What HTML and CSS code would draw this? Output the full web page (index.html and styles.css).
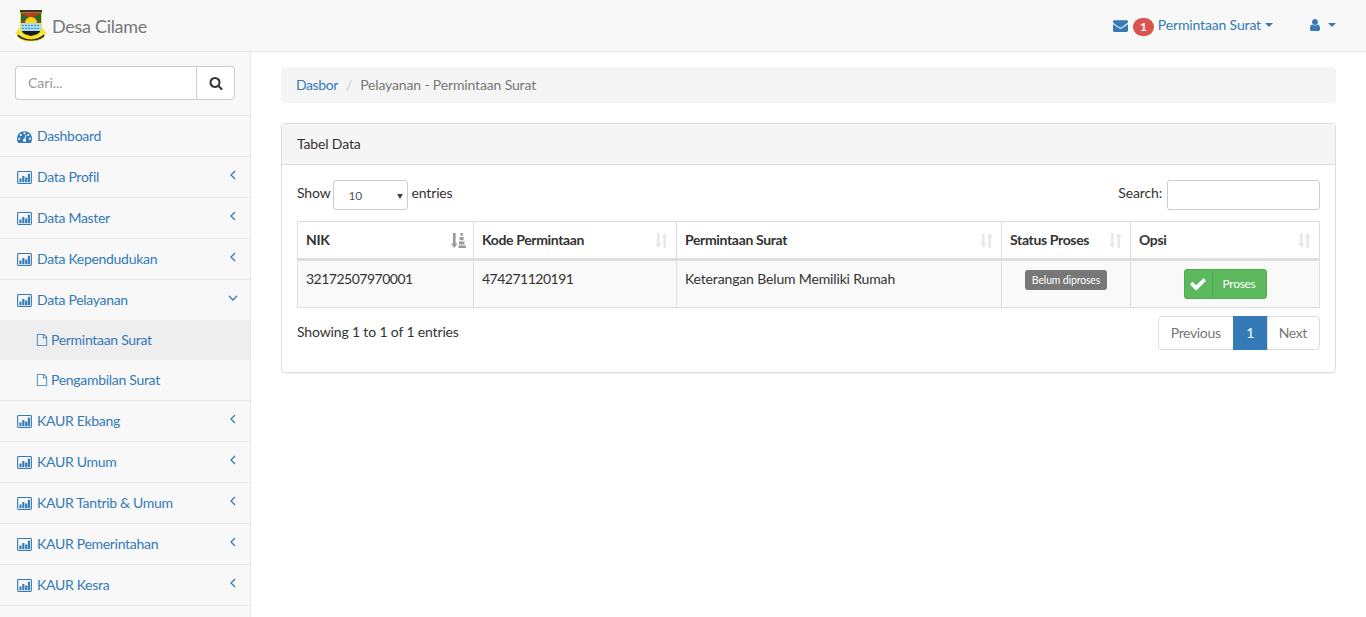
FILE: index.html
```html
<!DOCTYPE html>
<html lang="id">
<head>
<meta charset="utf-8">
<title>Desa Cilame</title>
<link rel="stylesheet" href="styles.css">
</head>
<body>
<svg class="defs" width="0" height="0" aria-hidden="true">
<symbol id="i-search" viewBox="0 0 1792 1792"><path d="M1216 832q0-185-131.5-316.5t-316.5-131.5-316.5 131.5-131.5 316.5 131.5 316.5 316.5 131.5 316.5-131.5 131.5-316.5zm512 832q0 52-38 90t-90 38q-54 0-90-38l-343-342q-179 124-399 124-143 0-273.5-55.5t-225-150-150-225-55.5-273.5 55.5-273.5 150-225 225-150 273.5-55.5 273.5 55.5 225 150 150 225 55.5 273.5q0 220-124 399l343 343q37 37 37 90z"/></symbol>
<symbol id="i-check" viewBox="0 0 1792 1792"><path d="M1671 566q0 40-28 68l-724 724-136 136q-28 28-68 28t-68-28l-136-136-362-362q-28-28-28-68t28-68l136-136q28-28 68-28t68 28l294 295 656-657q28-28 68-28t68 28l136 136q28 28 28 68z"/></symbol>
<symbol id="i-user" viewBox="0 0 1792 1792"><path d="M1536 1399q0 109-62.5 187t-150.5 78h-854q-88 0-150.5-78t-62.5-187q0-85 8.5-160.5t31.5-152 58.5-131 94-89 134.5-34.5q131 128 313 128t313-128q76 0 134.5 34.5t94 89 58.5 131 31.5 152 8.5 160.5zm-256-887q0 159-112.5 271.5t-271.5 112.5-271.5-112.5-112.5-271.5 112.5-271.5 271.5-112.5 271.5 112.5 112.5 271.5z"/></symbol>
<symbol id="i-mail" viewBox="0 0 1792 1792"><path d="M1792 710v794q0 66-47 113t-113 47h-1472q-66 0-113-47t-47-113v-794q44 49 101 87 362 246 497 345 57 42 92.5 65.5t94.5 48 110 24.5h2q51 0 110-24.5t94.5-48 92.5-65.5q170-123 498-345 57-39 100-87zm0-294q0 79-49 151t-122 123q-376 261-468 325-10 7-42.5 30.5t-54 38-52 32.5-57.5 27-50 9h-2q-23 0-50-9t-57.5-27-52-32.5-54-38-42.5-30.5q-91-64-262-182.5t-205-142.5q-62-42-117-115.5t-55-136.5q0-78 41.5-130t118.5-52h1472q65 0 112.5 47t47.5 113z"/></symbol>
<symbol id="i-dash" viewBox="0 0 1792 1792"><path d="M384 1152q0-53-37.5-90.5t-90.5-37.5-90.5 37.5-37.5 90.5 37.5 90.5 90.5 37.5 90.5-37.5 37.5-90.5zm192-448q0-53-37.5-90.5t-90.5-37.5-90.5 37.5-37.5 90.5 37.5 90.5 90.5 37.5 90.5-37.5 37.5-90.5zm428 481l101-382q6-26-7.5-48.5t-38.5-29.5-48 6.5-30 39.5l-101 382q-60 5-107 43.5t-63 98.5q-20 77 20 146t117 89 146-20 89-117q16-60-6-117t-72-91zm660-33q0-53-37.5-90.5t-90.5-37.5-90.5 37.5-37.5 90.5 37.5 90.5 90.5 37.5 90.5-37.5 37.5-90.5zm-640-640q0-53-37.5-90.5t-90.5-37.5-90.5 37.5-37.5 90.5 37.5 90.5 90.5 37.5 90.5-37.5 37.5-90.5zm448 192q0-53-37.5-90.5t-90.5-37.5-90.5 37.5-37.5 90.5 37.5 90.5 90.5 37.5 90.5-37.5 37.5-90.5zm320 448q0 261-141 483-19 29-54 29h-1402q-35 0-54-29-141-221-141-483 0-182 71-348t191-286 286-191 348-71 348 71 286 191 191 286 71 348z"/></symbol>
<symbol id="i-file" viewBox="0 0 1792 1792"><path d="M1596 380q28 28 48 76t20 88v1152q0 40-28 68t-68 28h-1344q-40 0-68-28t-28-68v-1600q0-40 28-68t68-28h896q40 0 88 20t76 48zm-444-244v376h376q-10-29-22-41l-313-313q-12-12-41-22zm384 1528v-1024h-416q-40 0-68-28t-28-68v-416h-768v1536h1280z"/></symbol>
<symbol id="i-chart" viewBox="0 0 16 14"><path fill-rule="evenodd" d="M1.500 0h13A1.500 1.500 0 0 1 16 1.500v11a1.500 1.500 0 0 1-1.500 1.500h-13A1.500 1.500 0 0 1 0 12.500v-11A1.500 1.500 0 0 1 1.500 0zm0 1.200a.3.3 0 0 0-.3.3v11a.3.3 0 0 0 .3.3h13a.3.3 0 0 0 .3-.3v-11a.3.3 0 0 0-.3-.3z"/><path d="M2.500 8h2.300v4H2.500zM5.600 5.500h2.300V12H5.600zM8.700 7h2.300v5H8.700zM11.600 3h2.300v9h-2.300z"/></symbol>
<symbol id="i-sort" viewBox="0 0 13 15"><path d="M2 0h2.600v10.500H6.500L3.300 15 0 10.500h2zM8.400 15h2.600V4.500h2L9.700 0 6.500 4.500h1.900z"/></symbol>
<symbol id="i-sorted" viewBox="0 0 15 15"><path d="M2 0h2.600v10.500H6.500L3.300 15 0 10.500h2zM9.500 0h2.400v2.800H9.500zM8.600 4h4v3.200h-4zM8 8.400h5.400v3H8zM7.500 12.400H15V15H7.500z"/></symbol>
<symbol id="i-left" viewBox="0 0 8 10"><path d="M6 1 2 5l4 4" fill="none" stroke="currentColor" stroke-width="1.300"/></symbol>
<symbol id="i-down" viewBox="0 0 10 8"><path d="M1 2l4 4 4-4" fill="none" stroke="currentColor" stroke-width="1.300"/></symbol>
</svg>

<header class="navbar">
  <a class="brand" href="#">
    <svg class="logo" viewBox="0 0 32 32" aria-hidden="true">
      <path d="M0 23c2-.5 3-3 4-6 1 3 1 6 1 8zM32 23c-2-.5-3-3-4-6-1 3-1 6-1 8z" fill="#f5e11c"/>
      <path d="M5 0h22v21c0 5-6 7-11 9-5-2-11-4-11-9z" fill="#f5e11c"/>
      <rect x="5" y="0" width="22" height="2.500" fill="#3a3320"/>
      <path d="M6 3h20v10H6z" fill="#c0362c"/>
      <path d="M6 3l7 4-7 6zM26 3l-7 4 7 6z" fill="#1c6f3a"/>
      <path d="M10 13a6 6 0 0 1 12 0z" fill="#f5d90a"/>
      <path d="M6 13h20v8H6z" fill="#a6dcf2"/>
      <path d="M7 15.500h18M7 18.500h18" stroke="#4a90c8" stroke-width="1.200" stroke-dasharray="2 1"/>
      <path d="M7 21h18c0 2-4 4-9 5-5-1-9-3-9-5z" fill="#1b1b1b"/>
      <path d="M3 24c4 3 8 5 13 5s9-2 13-5l1 2c-4 4-9 5-14 5s-10-1-14-5z" fill="#2a2a12" stroke="#f5e11c" stroke-width=".8"/>
    </svg>
    <span>Desa Cilame</span>
  </a>
  <nav class="nav-right">
    <a class="nav-link nav-notif" href="#">
      <svg class="ic ic-mail"><use href="#i-mail"/></svg>
      <span class="badge-count">1</span>
      <span class="notif-text">Permintaan Surat</span>
      <i class="caret"></i>
    </a>
    <a class="nav-link nav-user" href="#">
      <svg class="ic ic-14"><use href="#i-user"/></svg>
      <i class="caret"></i>
    </a>
  </nav>
</header>

<div class="layout">
  <aside class="sidebar">
    <div class="side-search">
      <div class="input-group">
        <input class="search-input" type="text" placeholder="Cari...">
        <button class="search-btn" type="button"><svg class="ic ic-14"><use href="#i-search"/></svg></button>
      </div>
    </div>
    <ul class="menu">
      <li class="menu-item"><a href="#"><svg class="ic ic-dash"><use href="#i-dash"/></svg><span>Dashboard</span></a></li>
      <li class="menu-item"><a href="#"><svg class="ic ic-chart"><use href="#i-chart"/></svg><span>Data Profil</span><svg class="arrow"><use href="#i-left"/></svg></a></li>
      <li class="menu-item"><a href="#"><svg class="ic ic-chart"><use href="#i-chart"/></svg><span>Data Master</span><svg class="arrow"><use href="#i-left"/></svg></a></li>
      <li class="menu-item"><a href="#"><svg class="ic ic-chart"><use href="#i-chart"/></svg><span>Data Kependudukan</span><svg class="arrow"><use href="#i-left"/></svg></a></li>
      <li class="menu-item">
        <a href="#"><svg class="ic ic-chart"><use href="#i-chart"/></svg><span>Data Pelayanan</span><svg class="arrow arrow-down"><use href="#i-down"/></svg></a>
        <ul class="submenu">
          <li class="sub-item active"><a href="#"><svg class="ic ic-file"><use href="#i-file"/></svg><span>Permintaan Surat</span></a></li>
          <li class="sub-item"><a href="#"><svg class="ic ic-file"><use href="#i-file"/></svg><span>Pengambilan Surat</span></a></li>
        </ul>
      </li>
      <li class="menu-item"><a href="#"><svg class="ic ic-chart"><use href="#i-chart"/></svg><span>KAUR Ekbang</span><svg class="arrow"><use href="#i-left"/></svg></a></li>
      <li class="menu-item"><a href="#"><svg class="ic ic-chart"><use href="#i-chart"/></svg><span>KAUR Umum</span><svg class="arrow"><use href="#i-left"/></svg></a></li>
      <li class="menu-item"><a href="#"><svg class="ic ic-chart"><use href="#i-chart"/></svg><span>KAUR Tantrib &amp; Umum</span><svg class="arrow"><use href="#i-left"/></svg></a></li>
      <li class="menu-item"><a href="#"><svg class="ic ic-chart"><use href="#i-chart"/></svg><span>KAUR Pemerintahan</span><svg class="arrow"><use href="#i-left"/></svg></a></li>
      <li class="menu-item"><a href="#"><svg class="ic ic-chart"><use href="#i-chart"/></svg><span>KAUR Kesra</span><svg class="arrow"><use href="#i-left"/></svg></a></li>
    </ul>
  </aside>

  <main class="page">
    <ol class="breadcrumb">
      <li class="crumb-link"><a href="#">Dasbor</a></li>
      <li class="sep">/</li>
      <li class="current">Pelayanan - Permintaan Surat</li>
    </ol>

    <section class="panel">
      <div class="panel-heading">Tabel Data</div>
      <div class="panel-body">
        <div class="dt-top">
          <label class="dt-length"><span class="len-show">Show</span>
            <span class="select-box"><span>10</span><i class="select-arrow"></i></span>
            <span>entries</span></label>
          <label class="dt-filter">Search: <input class="dt-input" type="search"></label>
        </div>
        <table class="table">
          <colgroup>
            <col class="c1"><col class="c2"><col class="c3"><col class="c4"><col class="c5">
          </colgroup>
          <thead>
            <tr>
              <th><div class="th-in">NIK<svg class="sort sorted"><use href="#i-sorted"/></svg></div></th>
              <th><div class="th-in">Kode Permintaan<svg class="sort"><use href="#i-sort"/></svg></div></th>
              <th><div class="th-in">Permintaan Surat<svg class="sort"><use href="#i-sort"/></svg></div></th>
              <th><div class="th-in">Status Proses<svg class="sort"><use href="#i-sort"/></svg></div></th>
              <th><div class="th-in">Opsi<svg class="sort"><use href="#i-sort"/></svg></div></th>
            </tr>
          </thead>
          <tbody>
            <tr>
              <td class="num">32172507970001</td>
              <td class="num">474271120191</td>
              <td>Keterangan Belum Memiliki Rumah</td>
              <td class="center"><span class="label">Belum diproses</span></td>
              <td class="center"><a class="btn-proses" href="#"><span class="btn-ic"><svg class="ic ic-check"><use href="#i-check"/></svg></span><span class="btn-tx">Proses</span></a></td>
            </tr>
          </tbody>
        </table>
        <div class="dt-bottom">
          <div class="dt-info">Showing 1 to 1 of 1 entries</div>
          <ul class="pagination">
            <li><a href="#">Previous</a></li>
            <li class="on"><a href="#">1</a></li>
            <li><a href="#">Next</a></li>
          </ul>
        </div>
      </div>
    </section>
  </main>
</div>
</body>
</html>
```

FILE: styles.css
```css
* { box-sizing: border-box; }
html, body { margin: 0; height: 617px; overflow: hidden; }
body {
  background: #fff;
  color: #333;
  font: 14px/20px Lato, "Liberation Sans", sans-serif;
  letter-spacing: -.15px;
}
a { color: #337ab7; text-decoration: none; }
ul, ol { list-style: none; margin: 0; padding: 0; }
.defs { position: absolute; }
.ic { fill: currentColor; flex: none; display: block; }
.ic-14 { width: 14px; height: 14px; }
.ic-mail { width: 15px; height: 15px; }

.navbar {
  height: 52px;
  background: #f8f8f8;
  border-bottom: 1px solid #e7e7e7;
  display: flex;
  justify-content: space-between;
  align-items: center;
}
.brand {
  display: flex;
  align-items: center;
  gap: 5px;
  color: #777;
  font-size: 18px;
  padding-left: 15px;
  letter-spacing: -.3px;
}
.logo { width: 32px; height: 32px; display: block; }
.nav-right { display: flex; align-items: center; padding-right: 30px; margin-top: -1px; }
.nav-link { display: flex; align-items: center; }
.nav-notif { gap: 5px; margin-right: 35px; }
.notif-text { margin-left: -1px; }
.nav-notif .caret { margin-left: -1px; }
.nav-user { gap: 6px; }
.caret {
  width: 0; height: 0;
  border-top: 4px solid currentColor;
  border-left: 4px solid transparent;
  border-right: 4px solid transparent;
}
.badge-count {
  width: 21px; height: 18px;
  border-radius: 9px;
  background: #d9534f;
  color: #fff;
  font-size: 12px;
  font-weight: 700;
  line-height: 18px;
  text-align: center;
  margin-top: 3px;
}

.layout { display: flex; height: 565px; }
.sidebar {
  width: 251px;
  flex: none;
  background: #f8f8f8;
  border-right: 1px solid #e7e7e7;
}
.side-search {
  height: 64px;
  padding: 14px 15px;
  border-bottom: 1px solid #e7e7e7;
}
.input-group { display: flex; height: 34px; }
.search-input {
  flex: 1;
  min-width: 0;
  height: 34px;
  padding: 5px 12px 7px;
  border: 1px solid #ccc;
  border-right: 0;
  border-radius: 4px 0 0 4px;
  font: inherit;
  color: #555;
  background: #fff;
}
.search-input::placeholder { color: #999; opacity: 1; }
.search-btn {
  width: 39px;
  height: 34px;
  padding: 0;
  border: 1px solid #ccc;
  border-radius: 0 4px 4px 0;
  background: #fff;
  color: #333;
  display: flex;
  align-items: center;
  justify-content: center;
}
.menu { letter-spacing: -.3px; }
.menu-item { border-bottom: 1px solid #e7e7e7; }
.menu-item > a {
  height: 40px;
  display: flex;
  align-items: center;
  padding: 0 15px 0 17px;
  gap: 5px;
}
.ic-dash { width: 15px; height: 15px; }
.ic-chart { width: 15px; height: 13px; }
.arrow { width: 8px; height: 10px; margin-left: auto; margin-right: -2px; margin-top: -4px; }
.arrow-down { width: 10px; height: 8px; margin-right: -3px; }
.sub-item > a {
  height: 40px;
  display: flex;
  align-items: center;
  gap: 3px;
  padding-left: 36px;
}
.sub-item.active { background: #eee; }
.ic-file { width: 12px; height: 14px; }

.page { flex: 1; min-width: 0; padding: 15px 30px; }
.breadcrumb {
  height: 36px;
  background: #f5f5f5;
  border-radius: 4px;
  padding: 8px 15px;
  display: flex;
  gap: 8px;
  margin-bottom: 20px;
  color: #777;
}
.crumb-link { letter-spacing: -.4px; }
.sep { color: #ccc; }
.panel {
  border: 1px solid #ddd;
  border-radius: 4px;
  box-shadow: 0 1px 1px rgba(0, 0, 0, .05);
}
.panel-heading {
  height: 41px;
  padding: 10px 15px;
  background: #f5f5f5;
  border-bottom: 1px solid #ddd;
  border-radius: 3px 3px 0 0;
}
.panel-body { padding: 15px; }
.dt-top {
  display: flex;
  justify-content: space-between;
  align-items: center;
  height: 30px;
  margin-bottom: 11px;
}
.dt-length, .dt-filter { display: flex; align-items: center; gap: 4px; margin-top: -4px; font-weight: 400; }
.len-show { margin-right: -2px; }
.dt-filter { gap: 5px; }
.select-box {
  width: 75px;
  height: 30px;
  border: 1px solid #ccc;
  border-radius: 3px;
  background: #fff;
  color: #555;
  font-size: 12px;
  display: flex;
  align-items: center;
  justify-content: space-between;
  padding: 2px 4px 0 15px;
  margin-top: 4px;
}
.select-arrow {
  width: 0; height: 0;
  border-top: 5px solid #444;
  border-left: 3px solid transparent;
  border-right: 3px solid transparent;
}
.dt-input {
  width: 153px;
  height: 30px;
  padding: 5px 10px;
  border: 1px solid #ccc;
  border-radius: 3px;
  background: #fff;
  margin-top: 4px;
}
.table {
  width: 1023px;
  table-layout: fixed;
  border-collapse: collapse;
  background: #fff;
}
.c1 { width: 176px; } .c2 { width: 203px; } .c3 { width: 325px; } .c4 { width: 129px; } .c5 { width: 189px; }
.table th, .table td { border: 1px solid #ddd; padding: 8px; vertical-align: top; }
.table th { border-bottom: 3px solid #ddd; height: 38px; text-align: left; letter-spacing: -.35px; padding-top: 8px; padding-bottom: 7px; }
.table td { height: 48px; background: #f9f9f9; padding-top: 8px; }
.table td.num { letter-spacing: -.5px; }
.th-in { display: flex; align-items: center; justify-content: space-between; height: 20px; }
.sort { width: 13px; height: 15px; fill: #e8e8e8; flex: none; margin-right: 0; }
.sort.sorted { width: 15px; fill: #9a9a9a; margin-right: -1px; }
.table td.center { text-align: center; padding-top: 9px; padding-bottom: 0; }
.label {
  display: inline-block;
  background: #777;
  color: #fff;
  font-size: 10.500px;
  line-height: 14px;
  padding: 3px 7px;
  border-radius: 3px;
  vertical-align: top;
}
.table td.center:last-child { padding-top: 8px; }
.btn-proses {
  display: inline-flex;
  height: 30px;
  background: #5cb85c;
  border: 1px solid #4cae4c;
  border-radius: 3px;
  color: #fff;
  font-size: 12px;
  align-items: stretch;
  vertical-align: top;
}
.btn-ic {
  width: 28px;
  display: flex;
  align-items: center;
  justify-content: center;
  border-right: 1px solid #4cae4c;
}
.ic-check { width: 18px; height: 18px; }
.btn-tx { width: 53px; text-align: center; line-height: 28px; letter-spacing: -.3px; }
.dt-bottom { display: flex; justify-content: space-between; margin-top: 8px; }
.dt-info { padding-top: 6px; }
.pagination { display: flex; margin-bottom: 7px; letter-spacing: -.35px; }
.pagination a {
  display: block;
  height: 34px;
  padding: 6px 12px;
  border: 1px solid #ddd;
  margin-left: -1px;
  background: #fff;
  color: #777;
}
.pagination li:first-child a { border-radius: 4px 0 0 4px; }
.pagination li:last-child a { border-radius: 0 4px 4px 0; padding-left: 11px; }
.pagination .on a { background: #337ab7; border-color: #337ab7; color: #fff; min-width: 35px; text-align: center; }
```
